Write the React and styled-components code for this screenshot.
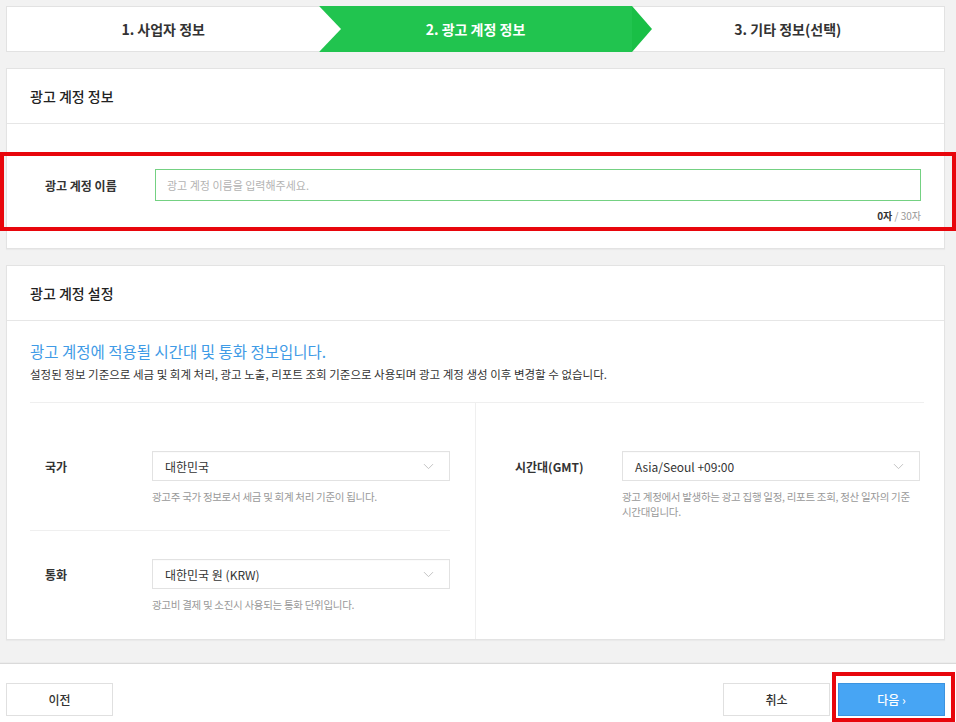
import React from "react";
import styled, { createGlobalStyle, css } from "styled-components";
import { ChevronDown } from "lucide-react";

const GlobalStyle = createGlobalStyle`
  html, body {
    margin: 0;
    padding: 0;
    background: #f2f2f2;
    font-family: "Noto Sans CJK KR", "Noto Sans", sans-serif;
    color: #333;
  }
  * {
    box-sizing: border-box;
  }
`;

const Page = styled.div`
  position: relative;
  min-height: 722px;
  display: flex;
  flex-direction: column;
`;

const Main = styled.div`
  flex: 1;
  display: flex;
  flex-direction: column;
  gap: 16px;
  padding: 6px 11px 23px 6px;
`;

const Steps = styled.div`
  display: flex;
  height: 46px;
  background: #fff;
  border: 1px solid #e2e2e2;
`;

const Step = styled.div`
  flex: 1;
  position: relative;
  display: flex;
  align-items: center;
  justify-content: center;
  font-size: 14px;
  font-weight: 700;
  color: #333;

  ${(p) =>
    p.$active &&
    css`
      margin: -1px 0;
      background: #21c44f;
      color: #fff;

      &::before {
        content: "";
        position: absolute;
        left: 0;
        top: 0;
        border-left: 22px solid #fff;
        border-top: 23px solid transparent;
        border-bottom: 23px solid transparent;
      }

      &::after {
        content: "";
        position: absolute;
        right: -20px;
        top: 0;
        z-index: 1;
        border-left: 20px solid #19bf46;
        border-top: 23px solid transparent;
        border-bottom: 23px solid transparent;
      }
    `}
`;

const Card = styled.section`
  background: #fff;
  border: 1px solid #e3e3e3;
  box-shadow: 0 1px 1px rgba(0, 0, 0, 0.03);
`;

const CardHeader = styled.h2`
  margin: 0;
  height: 55px;
  display: flex;
  align-items: center;
  padding-left: 23px;
  font-size: 14px;
  font-weight: 500;
  color: #222;
  border-bottom: 1px solid #e6e6e6;
`;

const NameBody = styled.div`
  padding: 45px 23px 25px 38px;
`;

const FieldRow = styled.div`
  display: flex;
  align-items: center;
`;

const Label = styled.label`
  flex: 0 0 ${(p) => p.$width || 107}px;
  font-size: 12px;
  font-weight: 700;
  color: #333;
`;

const TextInput = styled.input`
  flex: 1;
  height: 32px;
  border: 1px solid #74d182;
  padding: 0 11px;
  font-family: inherit;
  font-size: 11px;
  color: #333;
  outline: none;

  &::placeholder {
    color: #b3b3b3;
  }
`;

const Counter = styled.div`
  margin-top: 8px;
  text-align: right;
  font-size: 10px;
  line-height: 14px;
  color: #999;

  b {
    color: #333;
  }
`;

const SettingsBody = styled.div`
  padding: 20px 20px 0 23px;
`;

const Lead = styled.p`
  margin: 0;
  font-size: 15.5px;
  line-height: 20px;
  color: #3f9be6;
`;

const Note = styled.p`
  margin: 5px 0 0;
  font-size: 11.5px;
  line-height: 16px;
  color: #333;
`;

const Grid = styled.div`
  display: grid;
  grid-template-columns: 446px 1fr;
  margin-top: 20px;
  border-top: 1px solid #efefef;
`;

const Column = styled.div`
  padding: 19px ${(p) => p.$padRight}px 0 ${(p) => p.$pad}px;
  border-right: ${(p) => (p.$divider ? "1px solid #efefef" : "none")};
`;

const Field = styled.div`
  padding: 29px 0 26px;
  border-bottom: ${(p) => (p.$line ? "1px solid #efefef" : "none")};
  margin-left: ${(p) => (p.$line ? -15 : 0)}px;
  padding-left: ${(p) => (p.$line ? 15 : 0)}px;

  & + & {
    padding-top: 28px;
    padding-bottom: 27px;
  }
`;

const Select = styled.div`
  flex: 1;
  height: 30px;
  display: flex;
  align-items: center;
  justify-content: space-between;
  padding: 0 12px;
  border: 1px solid #e2e2e2;
  box-shadow: inset 0 1px 1px rgba(0, 0, 0, 0.02);
  font-size: 12px;
  color: #333;
`;

const Help = styled.p`
  margin: 8px 0 0 107px;
  font-size: 10.5px;
  line-height: 15px;
  color: #999;
  letter-spacing: -0.3px;
`;

const Footer = styled.footer`
  display: flex;
  align-items: flex-start;
  gap: 8px;
  height: 60px;
  padding: 19px 11px 0 6px;
  background: #fff;
  border-top: 1px solid #dadada;
  box-shadow: 0 -1px 0 #ececec;
`;

const Button = styled.button`
  width: 107px;
  height: 33px;
  font-family: inherit;
  font-size: 12px;
  font-weight: 500;
  cursor: pointer;
  border: 1px solid ${(p) => (p.$primary ? "#3b93df" : "#e0e0e0")};
  background: ${(p) => (p.$primary ? "#47a5f4" : "#fff")};
  color: ${(p) => (p.$primary ? "#fff" : "#333")};
  margin-left: ${(p) => (p.$push ? "auto" : "0")};
`;

const Highlight = styled.div`
  position: absolute;
  border: 4px solid #e8060c;
  pointer-events: none;
`;

function SelectField({ label, labelWidth, value, help }) {
  return (
    <>
      <FieldRow>
        <Label $width={labelWidth}>{label}</Label>
        <Select>
          <span>{value}</span>
          <ChevronDown size={17} strokeWidth={1.2} color="#b9b9b9" />
        </Select>
      </FieldRow>
      <Help>{help}</Help>
    </>
  );
}

export default function App() {
  return (
    <Page>
      <GlobalStyle />
      <Main>
        <Steps>
          <Step>1. 사업자 정보</Step>
          <Step $active>2. 광고 계정 정보</Step>
          <Step>3. 기타 정보(선택)</Step>
        </Steps>

        <Card>
          <CardHeader>광고 계정 정보</CardHeader>
          <NameBody>
            <FieldRow>
              <Label $width={110}>광고 계정 이름</Label>
              <TextInput placeholder="광고 계정 이름을 입력해주세요." />
            </FieldRow>
            <Counter>
              <b>0자</b> / 30자
            </Counter>
          </NameBody>
        </Card>

        <Card>
          <CardHeader>광고 계정 설정</CardHeader>
          <SettingsBody>
            <Lead>광고 계정에 적용될 시간대 및 통화 정보입니다.</Lead>
            <Note>
              설정된 정보 기준으로 세금 및 회계 처리, 광고 노출, 리포트 조회 기준으로 사용되며 광고 계정 생성 이후 변경할 수 없습니다.
            </Note>
            <Grid>
              <Column $pad={15} $padRight={25} $divider>
                <Field $line>
                  <SelectField
                    label="국가"
                    value="대한민국"
                    help="광고주 국가 정보로서 세금 및 회계 처리 기준이 됩니다."
                  />
                </Field>
                <Field>
                  <SelectField
                    label="통화"
                    value="대한민국 원 (KRW)"
                    help="광고비 결제 및 소진시 사용되는 통화 단위입니다."
                  />
                </Field>
              </Column>
              <Column $pad={39} $padRight={4}>
                <Field>
                  <SelectField
                    label="시간대(GMT)"
                    value="Asia/Seoul +09:00"
                    help={
                      <>
                        광고 계정에서 발생하는 광고 집행 일정, 리포트 조회, 정산 일자의 기준
                        <br />
                        시간대입니다.
                      </>
                    }
                  />
                </Field>
              </Column>
            </Grid>
          </SettingsBody>
        </Card>
      </Main>

      <Footer>
        <Button>이전</Button>
        <Button $push>취소</Button>
        <Button $primary>다음 ›</Button>
      </Footer>

      <Highlight style={{ left: 0, top: 152, width: 956, height: 79 }} />
      <Highlight style={{ left: 832, top: 672, width: 123, height: 50 }} />
    </Page>
  );
}
